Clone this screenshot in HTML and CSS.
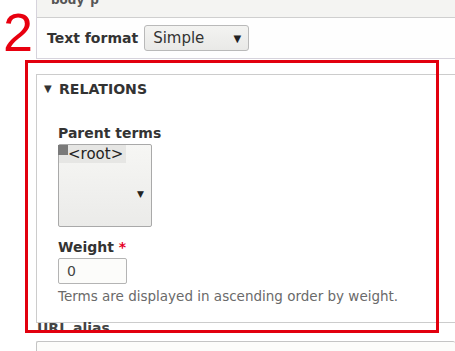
FILE: index.html
```html
<!DOCTYPE html>
<html>
<head>
  <link rel="stylesheet" href="styles.css">
</head>
<body>
  <div class="page">
    <div class="step-number">2</div>
    <div class="form-area">
      <div class="format-panel">
        <div class="crumbs"><span>body</span><span>p</span></div>
        <div class="format-row">
          <label class="format-label">Text format</label>
          <div class="fake-select">
            <span>Simple</span>
            <span class="caret">▼</span>
          </div>
        </div>
      </div>

      <div class="fieldset">
        <div class="summary"><span class="toggle">▼</span>RELATIONS</div>
        <div class="fieldset-body">
          <div class="field-label">Parent terms</div>
          <div class="listbox">
            <span class="option">&lt;root&gt;</span>
            <span class="list-caret">▼</span>
          </div>

          <div class="field-label weight-label">Weight <span class="required">*</span></div>
          <div class="text-input">0</div>
          <div class="description">Terms are displayed in ascending order by weight.</div>
        </div>
      </div>

      <div class="field-label alias-label">URL alias</div>
      <div class="text-input wide"></div>
    </div>
    <div class="highlight"></div>
  </div>
</body>
</html>
```

FILE: styles.css
```css
* {
  box-sizing: border-box;
  margin: 0;
  padding: 0;
}

html, body {
  background: #ffffff;
  overflow: hidden;
}

body {
  font-family: 'DejaVu Sans', 'Noto Sans', sans-serif;
  color: #333333;
  width: 455px;
  height: 351px;
}

.page {
  display: flex;
  position: relative;
  height: 351px;
  overflow: hidden;
}

.step-number {
  width: 36px;
  flex-shrink: 0;
  font-family: 'Liberation Sans', Arial, sans-serif;
  font-size: 54px;
  line-height: 53px;
  color: #e8000f;
  padding-top: 6px;
  padding-left: 3px;
}

.form-area {
  flex: 1;
  min-width: 0;
}

.format-panel {
  border-left: 1px solid #d6d3dc;
  border-bottom: 1px solid #d6d3dc;
  background: #fefefe;
}

.crumbs {
  height: 18px;
  background: #f4f4f2;
  border-bottom: 1px solid #cfcfcf;
  overflow: hidden;
  display: flex;
  gap: 6px;
  padding-left: 14px;
  font-size: 12px;
  font-weight: bold;
  color: #555555;
}

.crumbs span {
  display: block;
  line-height: 14px;
  margin-top: -7px;
}

.format-row {
  height: 40px;
  display: flex;
  align-items: center;
  padding-left: 10px;
  gap: 6px;
}

.format-label {
  font-size: 14px;
  font-weight: bold;
}

.fake-select {
  width: 105px;
  height: 26px;
  border: 1px solid #b9b9b9;
  border-radius: 3px;
  background: linear-gradient(#f3f3f1, #e9e9e7);
  display: flex;
  align-items: center;
  justify-content: space-between;
  padding: 0 7px 0 8px;
  font-size: 15px;
  color: #333333;
}

.caret {
  font-size: 10px;
  color: #222222;
}

.fieldset {
  margin-top: 15px;
  border: 1px solid #cccccc;
  border-right: none;
  padding-bottom: 17px;
}

.summary {
  padding-top: 4px;
  padding-left: 7px;
  font-size: 14.1px;
  line-height: 20px;
  font-weight: bold;
  color: #333333;
  display: flex;
}

.toggle {
  font-size: 10px;
  width: 15px;
}

.fieldset-body {
  padding-left: 21px;
}

.field-label {
  font-size: 14px;
  line-height: 20px;
  font-weight: bold;
  color: #333333;
  margin-top: 24px;
}

.required {
  color: #e6001f;
}

.listbox {
  margin-top: 1px;
  width: 94px;
  height: 83px;
  border: 1px solid #a9a9a9;
  border-radius: 2px;
  background: linear-gradient(#f6f6f4, #ebebe9);
  position: relative;
  display: flex;
  flex-direction: column;
  align-items: flex-start;
}

.option {
  font-size: 15px;
  line-height: 18px;
  background: #e6e6e4;
  padding-left: 9px;
  padding-right: 3px;
  position: relative;
  color: #222222;
}

.option::before {
  content: '';
  position: absolute;
  left: -1px;
  top: 0;
  width: 10px;
  height: 10px;
  background: #7a7a7a;
}

.list-caret {
  position: absolute;
  right: 7px;
  top: 44px;
  font-size: 9px;
  color: #222222;
}

.weight-label {
  margin-top: 10px;
}

.text-input {
  margin-top: 1px;
  width: 69px;
  height: 26px;
  border: 1px solid #b4b4b4;
  border-radius: 2px;
  background: #fcfcfa;
  font-size: 14px;
  line-height: 24px;
  padding-left: 8px;
  color: #444444;
}

.description {
  margin-top: 3px;
  font-size: 13.5px;
  line-height: 18px;
  color: #6a6a6a;
}

.alias-label {
  margin-top: -3px;
  line-height: 16px;
  color: #444444;
  padding-left: 1px;
}

.text-input.wide {
  margin-top: 5px;
  width: auto;
  height: 20px;
  border-color: #c4c4c4;
  border-right: none;
}

.highlight {
  position: absolute;
  left: 25px;
  top: 60px;
  width: 414px;
  height: 273px;
  border: 3px solid #e2000e;
}
```
